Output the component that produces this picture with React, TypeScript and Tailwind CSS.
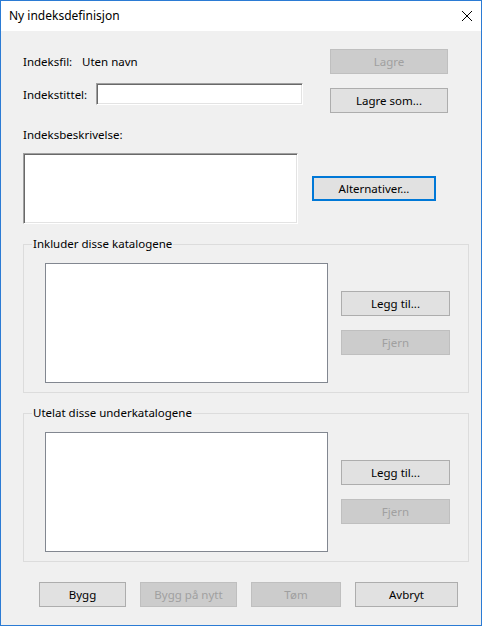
import type { ReactNode } from "react";

const FONT = "font-['Segoe_UI','Noto_Sans','Open_Sans',sans-serif]";

function Button({
  children,
  width,
  disabled,
  focused,
}: {
  children: ReactNode;
  width: string;
  disabled?: boolean;
  focused?: boolean;
}) {
  const base = "flex h-[25px] items-center justify-center text-[11.5px] leading-none";
  if (disabled) {
    return (
      <div className={`${base} ${width} border border-[#bfbfbf] bg-[#cccccc] text-[#a0a0a0]`}>
        {children}
      </div>
    );
  }
  if (focused) {
    return (
      <div className={`${base} ${width} border-2 border-[#0078d7] bg-[#e1e1e1] text-black`}>
        {children}
      </div>
    );
  }
  return (
    <div className={`${base} ${width} border border-[#adadad] bg-[#e1e1e1] text-black`}>
      {children}
    </div>
  );
}

const SUNKEN =
  "border border-t-[#a0a0a0] border-l-[#a0a0a0] border-r-white border-b-white bg-white shadow-[inset_1px_1px_0_#696969,inset_-1px_-1px_0_#e3e3e3]";

function Group({ title }: { title: string }) {
  return (
    <fieldset className="m-0 w-[446px] border border-[#dcdcdc] p-0">
      <legend className="ml-[8px] px-[1px] text-[11.5px] leading-[16px]">{title}</legend>
      <div className="flex pb-[9px] pl-[21px] pt-[11px]">
        <div className="h-[120px] w-[283px] border border-[#828790] bg-white" />
        <div className="ml-[13px] flex flex-col pt-[28px]">
          <Button width="w-[109px]">Legg til...</Button>
          <div className="mt-[14px]">
            <Button width="w-[109px]" disabled>
              Fjern
            </Button>
          </div>
        </div>
      </div>
    </fieldset>
  );
}

export default function App() {
  return (
    <div
      className={`${FONT} flex h-[626px] w-[482px] flex-col border border-[#2b7bd4] bg-[#f0f0f0] text-[11.5px] text-black`}
    >
      <div className="flex h-[30px] shrink-0 items-center bg-white pl-[8px]">
        <span className="text-[12px]">Ny indeksdefinisjon</span>
        <svg
          className="ml-auto mr-[9px]"
          width="10"
          height="10"
          viewBox="0 0 10 10"
          fill="none"
          stroke="#000"
          strokeWidth="1"
        >
          <path d="M0 0 L10 10 M10 0 L0 10" />
        </svg>
      </div>

      <div className="flex flex-col pl-[22px]">
        <div className="flex pt-[18px]">
          <div className="w-[307px]">
            <div className="flex h-[25px] items-center">
              <span className="w-[59px]">Indeksfil:</span>
              <span>Uten navn</span>
            </div>
            <div className="mt-[9px] flex items-center">
              <span className="w-[73px] pt-[1px]">Indekstittel:</span>
              <div className={`h-[22px] w-[207px] ${SUNKEN}`} />
            </div>
          </div>
          <div className="flex flex-col">
            <Button width="w-[118px]" disabled>
              Lagre
            </Button>
            <div className="mt-[14px]">
              <Button width="w-[118px]">Lagre som...</Button>
            </div>
          </div>
        </div>

        <div className="mt-[14px] h-[16px] leading-[16px]">Indeksbeskrivelse:</div>

        <div className="mt-[10px] flex">
          <div className={`h-[71px] w-[275px] ${SUNKEN}`} />
          <div className="ml-[14px] mt-[23px]">
            <Button width="w-[124px]" focused>
              Alternativer...
            </Button>
          </div>
        </div>

        <div className="mt-[12px]">
          <Group title="Inkluder disse katalogene" />
        </div>
        <div className="mt-[12px]">
          <Group title="Utelat disse underkatalogene" />
        </div>

        <div className="ml-[16px] mt-[20px] flex gap-[14px]">
          <Button width="w-[87px]">Bygg</Button>
          <Button width="w-[97px]" disabled>
            Bygg på nytt
          </Button>
          <Button width="w-[90px]" disabled>
            Tøm
          </Button>
          <Button width="w-[103px]">Avbryt</Button>
        </div>
      </div>
    </div>
  );
}
